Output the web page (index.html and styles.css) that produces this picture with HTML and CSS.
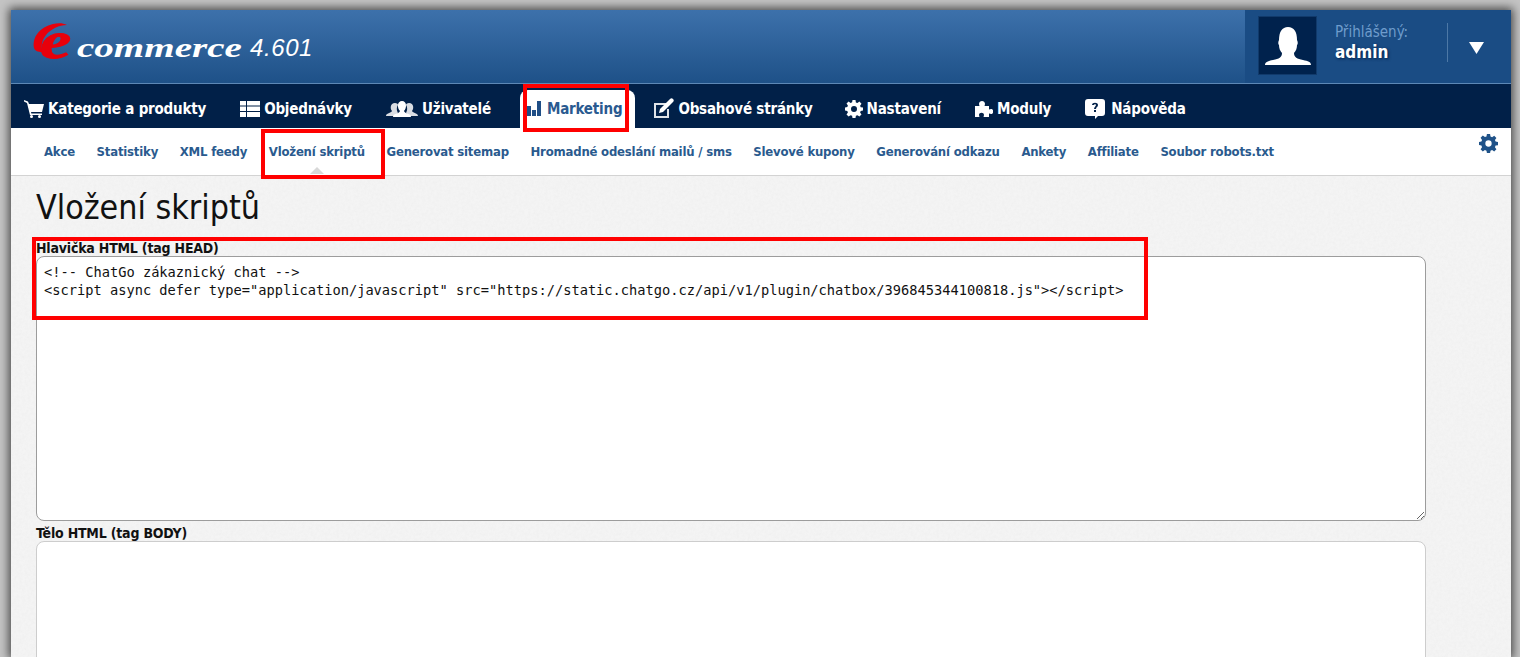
FILE: index.html
```html
<!DOCTYPE html>
<html lang="cs">
<head>
<meta charset="utf-8">
<title>Vložení skriptů</title>
<link rel="stylesheet" href="styles.css">
</head>
<body>
<div class="app">
  <header class="top">
    <div class="logo">
      <svg class="swoosh" width="44" height="36" viewBox="0 0 44 36"><path d="M2 25C0 14 8 4 21 1 26 0 31 0 35 2 27 2 19 6 14 12 10 17 9 22 10 29 6 29 3 28 2 25Z" fill="#e8000b"/></svg>
      <span class="logo-e">e</span>
      <span class="logo-word">commerce</span>
      <span class="logo-ver">4.601</span>
    </div>
    <div class="user">
      <div class="avatar">
        <svg width="46" height="40" viewBox="0 0 46 40"><path d="M0 39c0-3 3-4 8-5 6-1 9-3 9-7-2-2-3-5-3-8-1-1-1-3 0-5 0-8 3-13 9-13s9 5 9 13c1 2 1 4 0 5 0 3-1 6-3 8 0 4 3 6 9 7 5 1 8 2 8 5Z" fill="#fff"/></svg>
      </div>
      <div class="who">
        <span class="who-label">Přihlášený:</span>
        <span class="who-name">admin</span>
      </div>
      <div class="user-caret"><svg width="15" height="12" viewBox="0 0 15 12"><path d="M0 0H15L7.500 12Z" fill="#fff"/></svg></div>
    </div>
  </header>
  <nav class="mainnav">
    <a class="nav-item"><svg width="20" height="18" viewBox="0 0 20 18"><path d="M0 0l4 1.500 1 2.500H20l-2 8H7l.4 1.500H18V15H6L3 3 0 1.500Z" fill="#fff"/><circle cx="7.500" cy="16.500" r="1.500" fill="#fff"/><circle cx="15.500" cy="16.500" r="1.500" fill="#fff"/></svg>Kategorie a produkty</a>
    <a class="nav-item"><svg width="20" height="16" viewBox="0 0 20 16"><path d="M0 0h6v4.500H0ZM7 0h13v4.500H7ZM0 5.500h6V10H0ZM7 5.500h13V10H7ZM0 11h6v5H0ZM7 11h13v5H7Z" fill="#fff"/></svg>Objednávky</a>
    <a class="nav-item"><svg width="32" height="16" viewBox="0 0 32 16"><path d="M0 15c0-3 5-3 6-5-2-2-2-8 3-8 2 0 3 1 3 2-2 3-1 6 0 8l-3 3Z" fill="#d9dde3"/><path d="M32 15c0-3-5-3-6-5 2-2 2-8-3-8-2 0-3 1-3 2 2 3 1 6 0 8l3 3Z" fill="#d9dde3"/><path d="M7 16c0-4 6-3 7-6-3-3-3-10 2-10s5 7 2 10c1 3 7 2 7 6Z" fill="#fff"/></svg>Uživatelé</a>
    <a class="nav-item is-active"><svg width="14" height="15" viewBox="0 0 14 15"><path d="M0 5h4v10H0ZM5 9h4v6H5ZM10 0h4v15h-4Z" fill="#1f4e86"/></svg>Marketing</a>
    <a class="nav-item"><svg width="21" height="21" viewBox="0 0 21 21"><path d="M1 5h12v2H3v11h11v-7h2v9H1Z" fill="#dfe3e8"/><path d="M6 15l1-4 10-10c1-1 2-1 3 0s1 2 0 3L10 14Z" fill="#fff"/></svg>Obsahové stránky</a>
    <a class="nav-item nav-item-settings"><svg width="18" height="18" viewBox="0 0 18 18"><path d="M7.500 0h3l.4 2.400 1.500.6 2-1.400 2.100 2.100-1.400 2 .6 1.500 2.300.4v3l-2.300.4-.6 1.500 1.400 2-2.100 2.100-2-1.400-1.500.6-.4 2.200h-3l-.4-2.200-1.500-.6-2 1.400-2.100-2.100 1.400-2-.6-1.500L0 10.500v-3l2.300-.4.6-1.500-1.400-2 2.100-2.100 2 1.400 1.500-.6ZM9 6a3 3 0 1 0 0 6 3 3 0 0 0 0-6Z" fill="#fff" fill-rule="evenodd"/></svg>Nastavení</a>
    <a class="nav-item"><svg width="18" height="18" viewBox="0 0 18 18"><path d="M0 6h4c1 0 0-1 0-2 0-4 6-4 6 0 0 1-1 2 0 2h4v3c0 1 1 0 2 0 3 0 3 5 0 5-1 0-2-1-2 0v3H9c-1 0 0-1 0-2 0-3-5-3-5 0 0 1 1 2 0 2H0Z" fill="#fff"/></svg>Moduly</a>
    <a class="nav-item nav-item-help"><svg width="20" height="20" viewBox="0 0 20 20"><path fill-rule="evenodd" d="M3 0h14a3 3 0 0 1 3 3v11a3 3 0 0 1-3 3h-4l-3 3v-3H3a3 3 0 0 1-3-3V3a3 3 0 0 1 3-3ZM7 6h2c0-1 2-1 2 0s-2 2-2 4h2c0-2 2-2 2-4 0-3-6-3-6 0ZM9 11v2h2v-2Z" fill="#fff"/></svg>Nápověda</a>
  </nav>
  <nav class="subnav">
    <a class="sub-item">Akce</a>
    <a class="sub-item">Statistiky</a>
    <a class="sub-item">XML feedy</a>
    <a class="sub-item is-current">Vložení skriptů</a>
    <a class="sub-item">Generovat sitemap</a>
    <a class="sub-item">Hromadné odeslání mailů / sms</a>
    <a class="sub-item">Slevové kupony</a>
    <a class="sub-item">Generování odkazu</a>
    <a class="sub-item">Ankety</a>
    <a class="sub-item">Affiliate</a>
    <a class="sub-item">Soubor robots.txt</a>
    <svg class="sub-gear" width="19" height="19" viewBox="0 0 18 18"><path d="M7.500 0h3l.4 2.400 1.500.6 2-1.400 2.100 2.100-1.400 2 .6 1.500 2.300.4v3l-2.300.4-.6 1.500 1.400 2-2.100 2.100-2-1.400-1.500.6-.4 2.200h-3l-.4-2.200-1.500-.6-2 1.400-2.100-2.100 1.400-2-.6-1.500L0 10.500v-3l2.300-.4.6-1.500-1.400-2 2.100-2.100 2 1.400 1.500-.6ZM9 6a3 3 0 1 0 0 6 3 3 0 0 0 0-6Z" fill="#1f5288" fill-rule="evenodd"/></svg>
  </nav>
  <main class="content">
    <h1 class="title">Vložení skriptů</h1>
    <label class="field-label" for="head">Hlavička HTML (tag HEAD)</label>
    <textarea id="head" class="code code-head" spellcheck="false">&lt;!-- ChatGo zákaznický chat --&gt;
&lt;script async defer type="application/javascript" src="https://static.chatgo.cz/api/v1/plugin/chatbox/396845344100818.js"&gt;&lt;/script&gt;</textarea>
    <label class="field-label field-label-next" for="body">Tělo HTML (tag BODY)</label>
    <textarea id="body" class="code code-body" spellcheck="false"></textarea>
  </main>
</div>
<div class="mark mark-tab"></div>
<div class="mark mark-sub"></div>
<div class="mark mark-head"></div>
</body>
</html>
```
FILE: styles.css
```css
* { box-sizing: border-box; }
html, body { height: 100%; }
body {
  margin: 0;
  height: 657px;
  overflow: hidden;
  background: #c4c4c4;
  padding: 10px 9px 0 11px;
  font-family: "DejaVu Sans", "Noto Sans", sans-serif;
  font-stretch: condensed;
}
.app {
  height: 647px;
  overflow: hidden;
  display: flex;
  flex-direction: column;
  box-shadow: 0 0 9px 2px rgba(0,0,0,.65);
  position: relative;
}
.top {
  height: 74px;
  flex: none;
  display: flex;
  justify-content: space-between;
  background: linear-gradient(#3d71ab, #1e5188);
  border-bottom: 1px solid #5d88b6;
}
.logo {
  position: relative;
  display: flex;
  align-items: baseline;
  padding: 21px 0 0 66px;
  color: #fff;
}
.swoosh { position: absolute; left: 21px; top: 13px; }
.logo-e {
  position: absolute;
  left: 29px;
  top: 5px;
  font: italic 700 52px/52px "Liberation Serif", serif;
  color: #e8000b;
  transform: scaleX(1.35);
  transform-origin: 0 50%;
  -webkit-text-stroke: 1px #e8000b;
}
.logo-word {
  font: italic 700 28px/32px "Liberation Serif", serif;
  display: inline-block;
  transform: translateY(1px) scaleX(1.395);
  transform-origin: 0 50%;
  width: 173px;
}
.logo-ver {
  font: italic 400 24px/32px "Liberation Sans", sans-serif;
  letter-spacing: .6px;
}
.user {
  width: 266px;
  display: flex;
  align-items: flex-start;
  background: #1a4c84;
  padding: 6px 0 0 13px;
}
.avatar {
  width: 59px;
  height: 59px;
  background: #00224d;
  border: 1px solid #113a6b;
  display: flex;
  align-items: center;
  justify-content: center;
}
.who {
  width: 113px;
  margin: 7px 0 0 18px;
  padding-top: 1px;
  display: flex;
  flex-direction: column;
  border-right: 1px solid #4d78a6;
  height: 39px;
}
.who-label { font-size: 15px; line-height: 17px; color: #6f9ccc; }
.who-name { margin-top: 1px; font-size: 17px; line-height: 20px; font-weight: 700; color: #fff; text-shadow: 1px 1px 3px #00224d; white-space: nowrap; }
.user-caret { margin: 26px 0 0 21px; line-height: 0; }
.mainnav {
  height: 44px;
  flex: none;
  display: flex;
  align-items: flex-end;
  background: #012048;
  padding-left: 13px;
  gap: 18px;
}
.nav-item {
  height: 38px;
  display: flex;
  align-items: center;
  gap: 4px;
  padding: 0 16px 1px 0;
  font-size: 15px;
  font-weight: 700;
  letter-spacing: -.2px;
  color: #fff;
  white-space: nowrap;
}
.nav-item.is-active {
  background: #fff;
  color: #2a5a90;
  border-radius: 8px 8px 0 0;
  margin-left: -5px;
  padding: 0 13px 1px 7px;
  gap: 6px;
}
.nav-item-settings { margin-left: -2px; }
.nav-item-help { gap: 6px; }
.subnav {
  height: 48px;
  flex: none;
  display: flex;
  align-items: center;
  background: #fff;
  border-bottom: 1px solid #d3d3d3;
  padding: 0 0 1px 33px;
  gap: 21.700px;
  position: relative;
}
.sub-item { font-size: 13px; font-weight: 700; letter-spacing: -.2px; color: #2a5a8e; white-space: nowrap; }
.is-current { position: relative; }
.is-current::after {
  content: "";
  position: absolute;
  left: 50%;
  top: 23px;
  margin-left: -7px;
  border: 7px solid transparent;
  border-top: 0;
  border-bottom-color: #d8d8d8;
}
.sub-gear { position: absolute; right: 13px; top: 6px; }
.content {
  flex: 1;
  background-color: #f4f4f4;
  background-image: url("data:image/svg+xml;utf8,<svg xmlns='http://www.w3.org/2000/svg' width='200' height='200'><filter id='n'><feTurbulence type='fractalNoise' baseFrequency='.35' numOctaves='2'/><feColorMatrix values='0 0 0 0 .86 0 0 0 0 .86 0 0 0 0 .86 0 0 0 1.200 -.35'/></filter><rect width='200' height='200' filter='url(%23n)'/></svg>");
  padding: 10px 85px 0 25px;
}
.title {
  margin: 0;
  font-size: 33.700px;
  line-height: 44px;
  font-weight: 400;
  color: #111;
}
.field-label {
  display: block;
  margin-top: 10px;
  font-size: 14px;
  line-height: 16px;
  font-weight: 700;
  letter-spacing: -.2px;
  color: #111;
}
.field-label-next { margin-top: 4px; }
.code {
  display: block;
  width: 100%;
  margin: 0;
  background: #fff;
  border: 1px solid #9c9c9c;
  border-radius: 8px;
  padding: 6px 7px;
  font: 13.700px/18px "DejaVu Sans Mono", "Liberation Mono", monospace;
  color: #111;
  outline: none;
  white-space: pre;
}
.code-head { height: 265px; }
.code-body { height: 300px; border-color: #cdcdcd; }
.mark { position: absolute; border: 4px solid #f00; pointer-events: none; }
.mark-tab { left: 523px; top: 84px; width: 106px; height: 48px; }
.mark-sub { left: 261px; top: 129px; width: 124px; height: 50px; }
.mark-head { left: 32px; top: 237px; width: 1116px; height: 83px; }
```
